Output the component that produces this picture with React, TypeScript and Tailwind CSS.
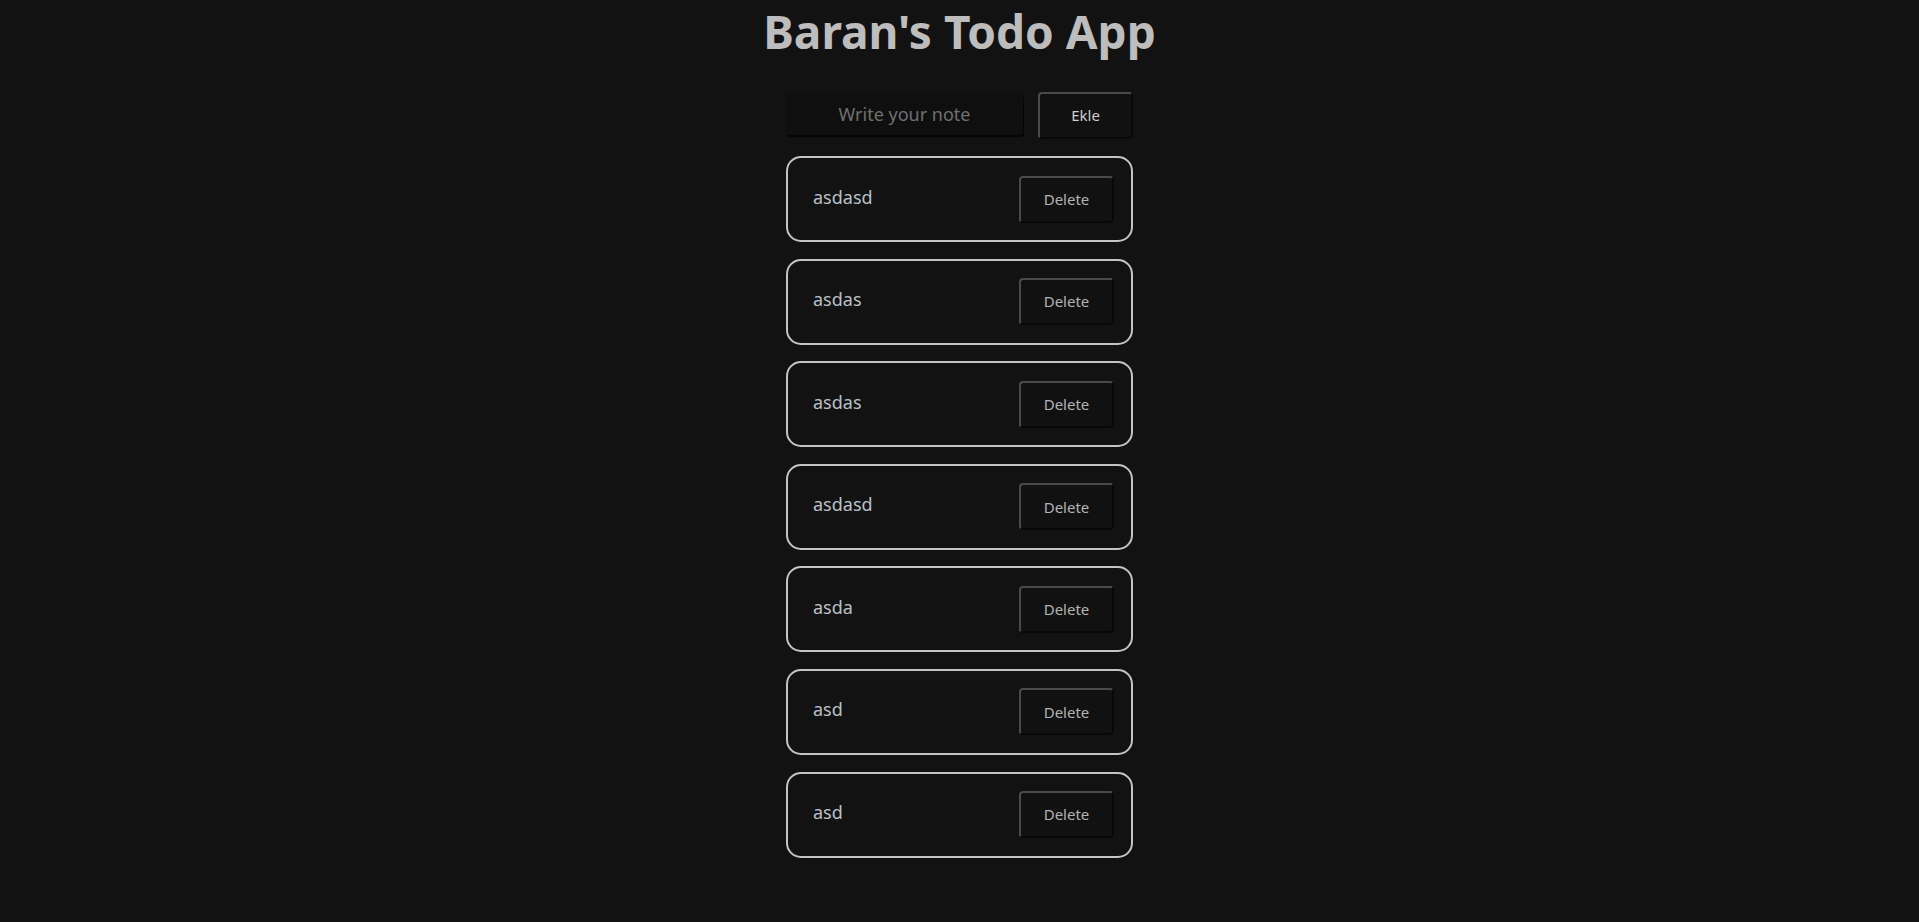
import React from "react";

const todos = ["asdasd", "asdas", "asdas", "asdasd", "asda", "asd", "asd"];

const btn =
  "bg-[#111111] rounded-[4px] border-2 border-t-[#4a4a4a] border-l-[#4a4a4a] border-b-[#080808] border-r-[#080808] text-[15px] text-[#b3b3b3] flex items-center justify-center";

export default function App() {
  return (
    <div
      className="min-h-screen w-full bg-[#121212] flex flex-col items-center"
      style={{ fontFamily: '"Noto Sans", "Open Sans", sans-serif' }}
    >
      <h1 className="text-[46px] leading-[62px] font-bold text-[#bdbdbd]">
        Baran's Todo App
      </h1>
      <div className="w-[347px] flex flex-col mt-[30px]">
        <div className="flex items-start gap-[15px] mb-[17px]">
          <div className="mt-[1px] w-[237px] h-[42px] rounded-[4px] bg-[#0f0f0f] shadow-[1px_2px_1px_#050505] flex items-center justify-center text-[18px] text-[#6f6f6f]">
            Write your note
          </div>
          <button className={btn + " w-[95px] h-[47px] text-[#cfcfcf]"}>Ekle</button>
        </div>
        <div className="flex flex-col gap-[16.6px]">
          {todos.map((t, i) => (
            <div
              key={i}
              className="h-[86px] rounded-[15px] border-2 border-[#c4c4c4] bg-[#121212] flex items-center justify-between pl-[25px] pr-[17px]"
            >
              <span className="text-[18px] text-[#b9c0c6] -mt-[4px]">{t}</span>
              <button className={btn + " w-[95px] h-[47px] text-[#a9b2bb]"}>Delete</button>
            </div>
          ))}
        </div>
      </div>
    </div>
  );
}
